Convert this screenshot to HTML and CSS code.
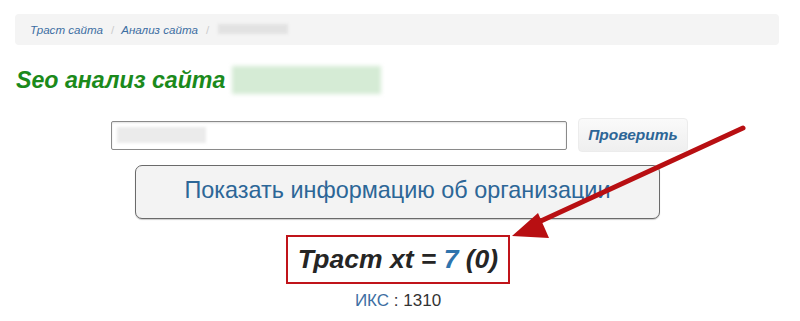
FILE: index.html
```html
<!DOCTYPE html>
<html lang="ru">
<head>
<meta charset="utf-8">
<title>Seo анализ сайта</title>
<link rel="stylesheet" href="styles.css">
</head>
<body>
<div class="page">
  <nav class="breadcrumb">
    <a class="crumb" href="#">Траст сайта</a>
    <span class="sep">/</span>
    <a class="crumb" href="#">Анализ сайта</a>
    <span class="sep">/</span>
    <span class="blur blur-crumb"></span>
  </nav>

  <h1 class="title">Seo анализ сайта <span class="blur blur-title"></span></h1>

  <form class="check-form">
    <div class="input-box"><span class="blur blur-input"></span></div>
    <button type="button" class="check-btn">Проверить</button>
  </form>

  <div class="org-row">
    <button type="button" class="org-btn">Показать информацию об организации</button>
  </div>

  <div class="trust-row">
    <div class="trust-box">Траст xt = <span class="num">7</span> (0)</div>
  </div>

  <div class="iks"><a href="#" class="iks-link">ИКС</a> : 1310</div>

  <svg class="arrow" width="800" height="321" viewBox="0 0 800 321">
    <line x1="743" y1="128" x2="530" y2="226" stroke="#b80f12" stroke-width="5" stroke-linecap="round"/>
    <polygon points="512,236 538,213 549,238" fill="#b80f12"/>
  </svg>
</div>
</body>
</html>
```

FILE: styles.css
```css
* { box-sizing: border-box; }
html, body { margin: 0; padding: 0; background: #fff; }
body { font-family: "Liberation Sans", Arial, sans-serif; color: #222; }

.page {
  position: relative;
  width: 800px;
  height: 321px;
  padding: 14px 21px 0 15px;
  overflow: hidden;
}

.breadcrumb {
  height: 31px;
  background: #f4f4f4;
  border-radius: 4px;
  display: flex;
  align-items: center;
  padding: 0 0 1px 15px;
  font-size: 11.6px;
  font-style: italic;
}
.crumb { color: #3d6ea2; text-decoration: none; }
.sep { color: #ccc; margin: 0 7px 0 8px; font-style: normal; }

.blur { display: inline-block; filter: blur(1.5px); }
.blur-crumb { width: 70px; height: 10px; background: #e2e2e2; margin-left: 2px; }
.blur-title { width: 149px; height: 28px; background: #d5ebd5; vertical-align: -6px; margin-left: 0; filter: blur(2px); }
.blur-input { width: 89px; height: 16px; background: #ebebeb; }

.title {
  margin: 20px 0 0 1px;
  height: 32px;
  font-size: 23.2px;
  font-weight: bold;
  font-style: italic;
  color: #1b8a1b;
  line-height: 30px;
}

.check-form {
  display: flex;
  justify-content: center;
  align-items: center;
  margin: 21px 0 0 0;
  padding-left: 5px;
  gap: 11px;
  height: 34px;
}
.input-box {
  width: 456px;
  height: 29px;
  border: 1px solid #8a8a8a;
  border-radius: 2px;
  box-shadow: inset 0 1px 2px rgba(0,0,0,0.12);
  display: flex;
  align-items: center;
  padding-left: 5px;
  background: #fff;
}
.check-btn {
  width: 110px;
  height: 34px;
  border: 1px solid #ececec;
  border-radius: 4px;
  background: linear-gradient(#fafafa, #efefef);
  color: #2d6697;
  font-family: "Liberation Sans", Arial, sans-serif;
  font-size: 15.5px;
  font-weight: bold;
  font-style: italic;
  padding: 0;
}

.org-row { display: flex; justify-content: center; margin-top: 13px; padding-left: 1px; }
.org-btn {
  width: 525px;
  height: 54px;
  border: 1px solid #6a6a6a;
  border-radius: 7px;
  background: #f3f3f3;
  box-shadow: 0 1px 1px rgba(0,0,0,0.2);
  color: #2c6697;
  font-family: "Liberation Sans", Arial, sans-serif;
  font-size: 23.4px;
  padding: 0 0 4px 0;
}

.trust-row { display: flex; justify-content: center; margin-top: 16px; padding-left: 2px; }
.trust-box {
  width: 224px;
  height: 49px;
  border: 2px solid #c0141a;
  display: flex;
  align-items: center;
  justify-content: center;
  font-size: 26.5px;
  font-weight: bold;
  font-style: italic;
  color: #252525;
  white-space: pre;
}
.num { color: #2f74ad; }

.iks {
  text-align: center;
  padding-left: 2px;
  margin-top: 7px;
  font-size: 17px;
  color: #333;
}
.iks-link { color: #3d6ea2; text-decoration: none; }

.arrow { position: absolute; left: 0; top: 0; pointer-events: none; }
```
